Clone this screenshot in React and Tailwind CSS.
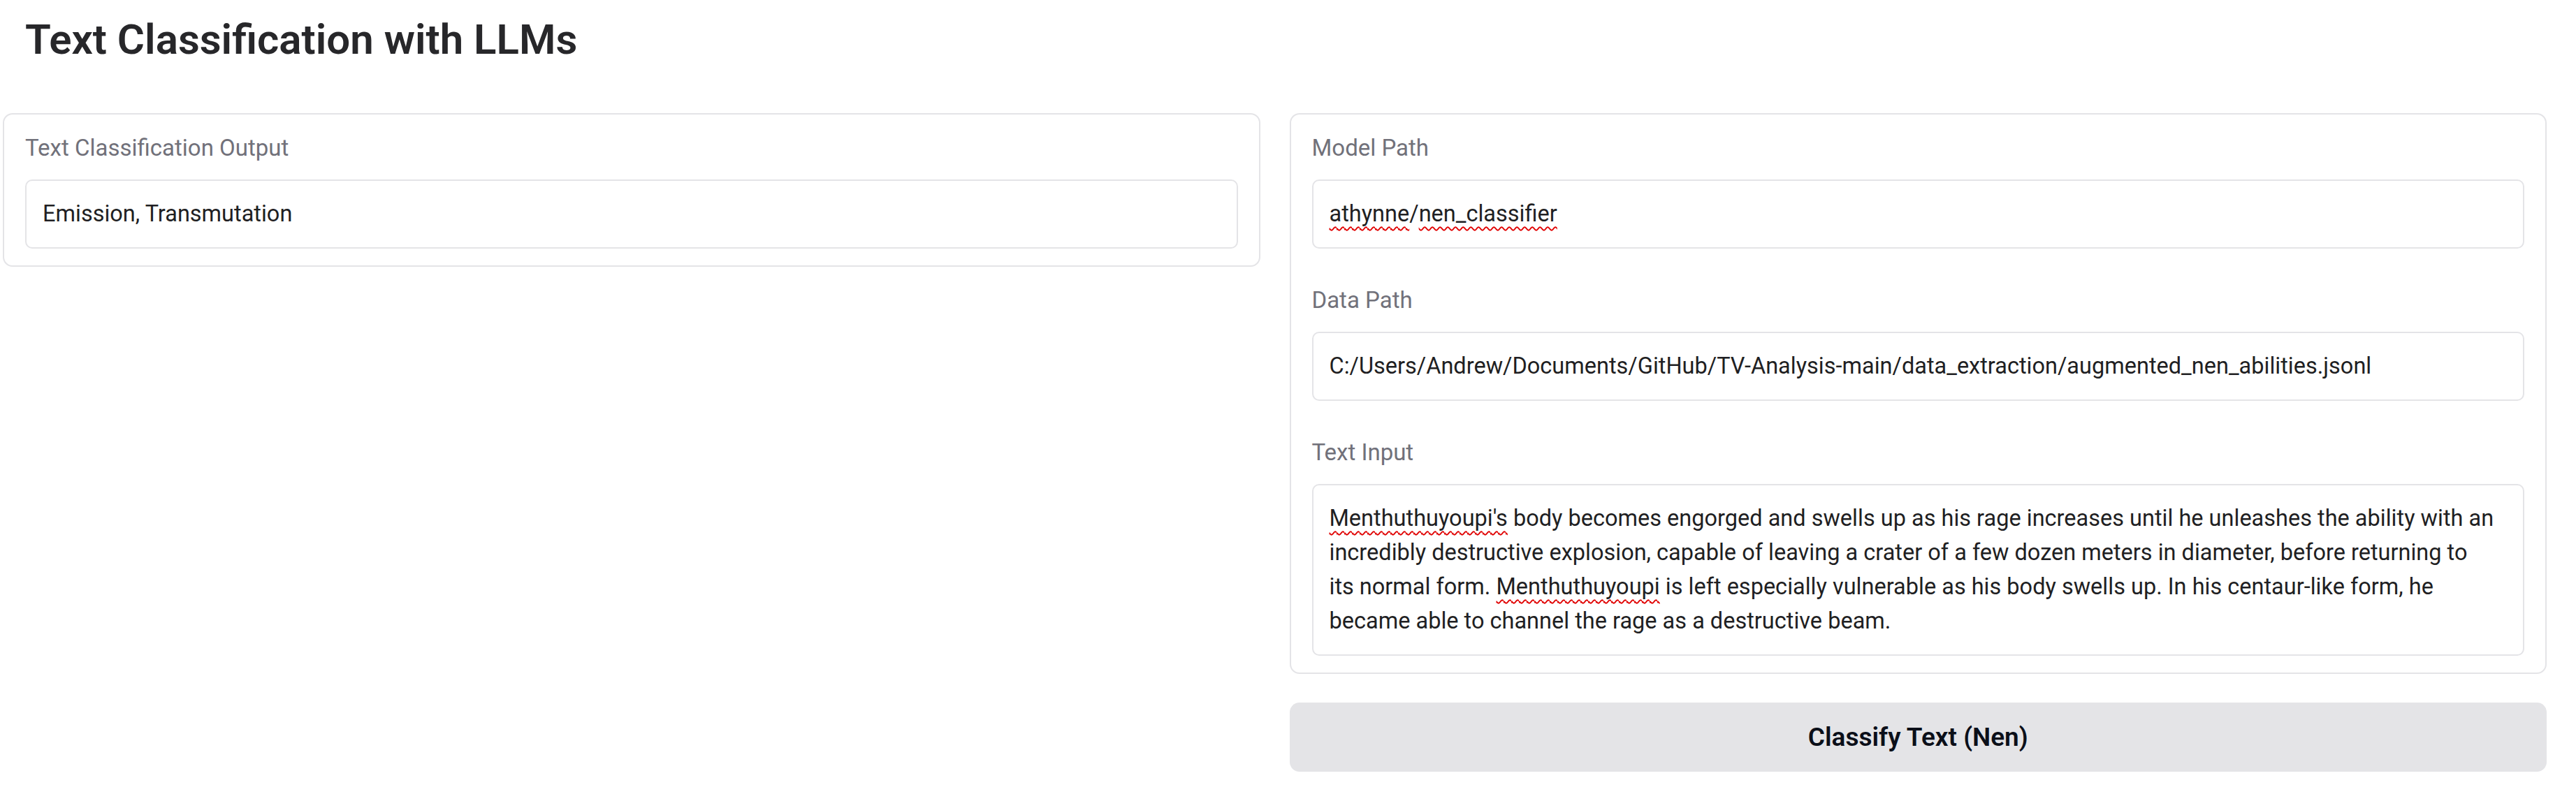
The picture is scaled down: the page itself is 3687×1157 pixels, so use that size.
import React from "react";

const FONT = { fontFamily: 'Roboto, "Liberation Sans", sans-serif' };

function Label({ children }) {
  return (
    <div className="text-[33px] leading-[48px] text-[#71717a] mb-[21px] whitespace-nowrap">
      {children}
    </div>
  );
}

function Box({ children, className = "" }) {
  return (
    <div
      className={
        "border-2 border-[#e4e4e7] rounded-[10px] px-[23px] py-[23px] text-[32.5px] leading-[49px] text-[#1f1f23] bg-white whitespace-nowrap overflow-hidden " +
        className
      }
    >
      {children}
    </div>
  );
}

const Sq = ({ children }) => (
  <span className="underline decoration-wavy decoration-[#e00000] decoration-[2px] underline-offset-[7px] [text-decoration-skip-ink:none]">
    {children}
  </span>
);

export default function App() {
  return (
    <div className="w-[3687px] min-h-[1157px] bg-white" style={FONT}>
      <div className="pl-[4px] pr-[42px]">
        <div className="h-[162px] pl-[32px] pt-[20px]">
          <h1 className="text-[60px] leading-[74px] font-semibold text-[#27272a] whitespace-nowrap">
            Text Classification with LLMs
          </h1>
        </div>
        <div className="grid grid-cols-2 items-start gap-[42px]">
          <div className="min-w-0 border-2 border-[#e4e4e7] rounded-[14px] px-[30px] pt-[24px] pb-[24px] bg-white">
            <Label>Text Classification Output</Label>
            <Box>Emission, Transmutation</Box>
          </div>
          <div className="min-w-0 flex flex-col gap-[41px]">
            <div className="border-2 border-[#e4e4e7] rounded-[14px] px-[30px] pt-[24px] pb-[24px] bg-white flex flex-col gap-[50px]">
              <div>
                <Label>Model Path</Label>
                <Box>
                  <Sq>athynne</Sq>/<Sq>nen_classifier</Sq>
                </Box>
              </div>
              <div>
                <Label>Data Path</Label>
                <Box>
                  C:/Users/Andrew/Documents/GitHub/TV-Analysis-main/data_extraction/augmented_nen_abilities.jsonl
                </Box>
              </div>
              <div>
                <Label>Text Input</Label>
                <Box>
                  <div>
                    <Sq>Menthuthuyoupi's</Sq> body becomes engorged and swells up as his rage increases until he unleashes the ability with an
                  </div>
                  <div>
                    incredibly destructive explosion, capable of leaving a crater of a few dozen meters in diameter, before returning to
                  </div>
                  <div>
                    its normal form. <Sq>Menthuthuyoupi</Sq> is left especially vulnerable as his body swells up. In his centaur-like form, he
                  </div>
                  <div>became able to channel the rage as a destructive beam.</div>
                </Box>
              </div>
            </div>
            <button className="h-[99px] w-full rounded-[14px] bg-[#e4e4e7] text-[37px] font-semibold text-[#0b0f19]">
              Classify Text (Nen)
            </button>
          </div>
        </div>
      </div>
    </div>
  );
}
